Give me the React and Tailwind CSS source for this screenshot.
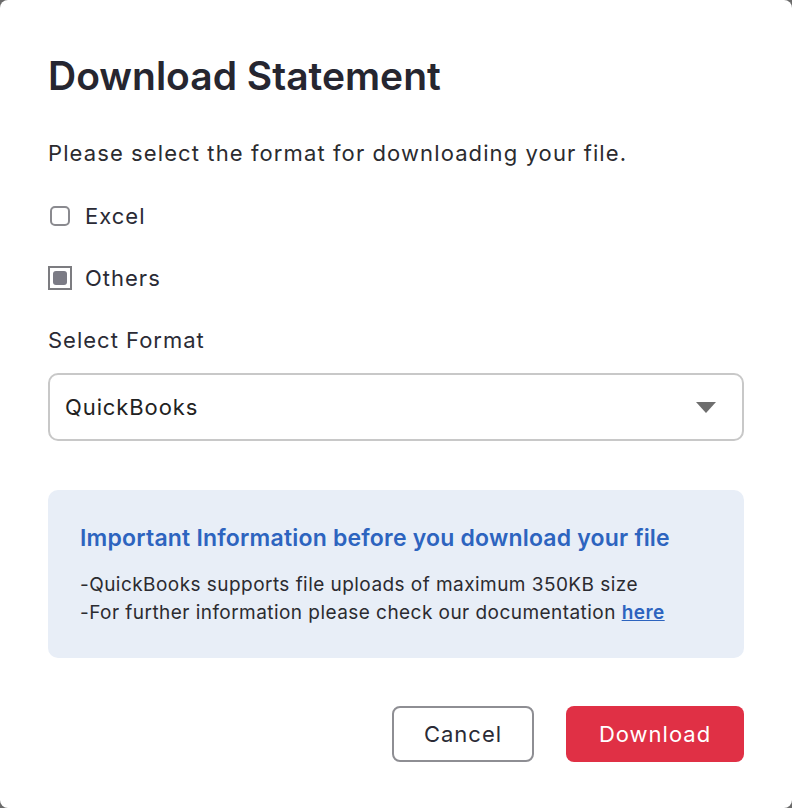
export default function App() {
  return (
    <div className="w-[792px] h-[808px] bg-[#6b6b6b]" style={{ fontFamily: 'Inter, "Noto Sans", sans-serif' }}>
      <div className="w-full h-full bg-white rounded-[8px] px-12 pt-[54px] text-[#2a2a35]">
        <h1 className="text-[39px] leading-[44px] font-semibold tracking-[0px] text-[#262630]">Download Statement</h1>

        <p className="mt-[41px] text-[22px] leading-[28px] tracking-[1.1px] text-[#2b2b2f]">
          Please select the format for downloading your file.
        </p>

        <label className="mt-[35px] flex items-center h-[28px]">
          <span className="ml-[2px] w-[20px] h-[20px] border-2 border-[#8a8a8f] rounded-[5px]" />
          <span className="ml-[15px] text-[22px] leading-[28px] tracking-[1px]">Excel</span>
        </label>

        <label className="mt-[34px] flex items-center h-[28px]">
          <span className="w-[24px] h-[24px] border-2 border-[#7c7c80] flex items-center justify-center">
            <span className="w-[14px] h-[14px] rounded-[3px] bg-[#7b7b85]" />
          </span>
          <span className="ml-[13px] text-[22px] leading-[28px] tracking-[1px]">Others</span>
        </label>

        <p className="mt-[34px] text-[22px] leading-[28px] tracking-[1px] text-[#2b2b35]">Select Format</p>

        <div className="mt-[19px] h-[68px] border-2 border-[#c8c8c8] rounded-[10px] flex items-center justify-between pl-[15px] pr-[26px]">
          <span className="text-[22px] tracking-[0.9px] text-[#222]">QuickBooks</span>
          <svg width="20" height="11" viewBox="0 0 20 11">
            <path d="M0 0h20L10 11z" fill="#6e6e6e" />
          </svg>
        </div>

        <div className="mt-[49px] h-[168px] bg-[#e8eef7] rounded-[10px] pl-8 pt-[33px]">
          <p className="text-[23px] leading-[30px] font-semibold text-[#2d64bf] tracking-[0.2px]">
            Important Information before you download your file
          </p>
          <p className="mt-[18px] text-[19px] leading-[28px] tracking-[0.45px] text-[#2b2b30]">
            -QuickBooks supports file uploads of maximum 350KB size
          </p>
          <p className="text-[19px] leading-[28px] tracking-[0.45px] text-[#2b2b30]">
            -For further information please check our documentation{' '}
            <a className="underline font-semibold text-[#2d64bf]" href="#">here</a>
          </p>
        </div>

        <div className="mt-[48px] flex justify-end gap-8">
          <button className="w-[142px] h-[56px] border-2 border-[#8e8e93] rounded-[8px] text-[22px] tracking-[1px] text-[#2a2a35]">
            Cancel
          </button>
          <button className="w-[178px] h-[56px] bg-[#e03045] rounded-[8px] text-[22px] tracking-[1px] text-white">
            Download
          </button>
        </div>
      </div>
    </div>
  );
}
